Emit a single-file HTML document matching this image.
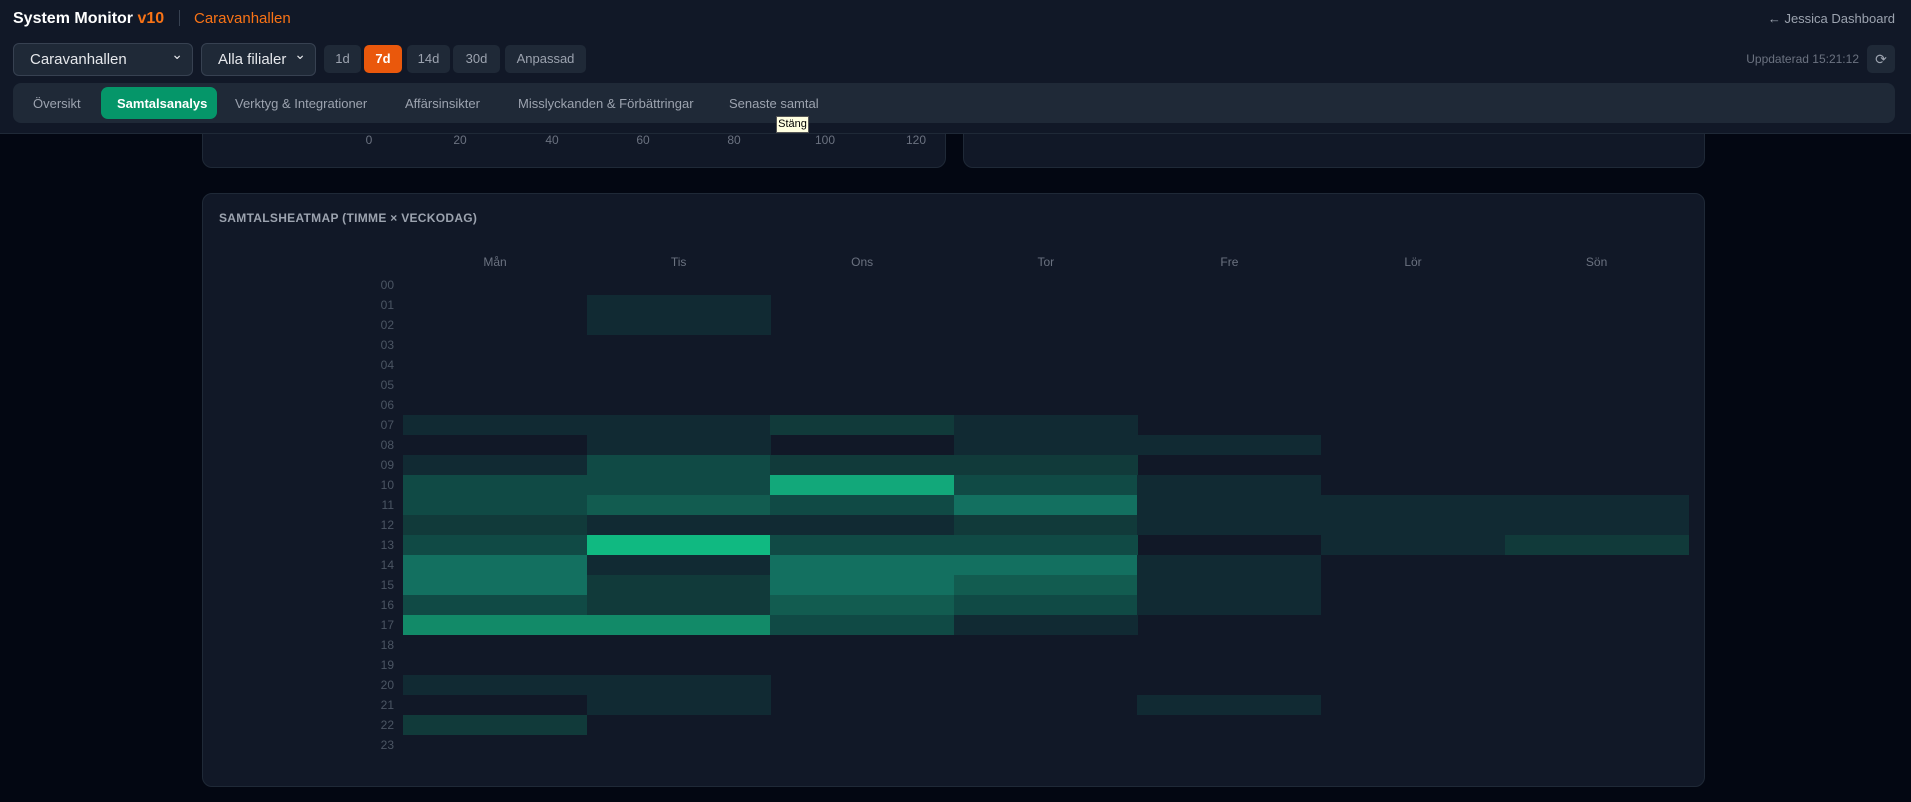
<!DOCTYPE html>
<html><head><meta charset="utf-8">
<style>
*{box-sizing:border-box;margin:0;padding:0}
body{width:1911px;height:802px;overflow:hidden;background:#030712;font-family:"Liberation Sans",sans-serif;position:relative;color:#e5e7eb}
.hdr{position:absolute;left:0;top:0;width:1911px;height:134px;background:#111827;border-bottom:1px solid #1f2937;z-index:2}
.abs{position:absolute}
.sel{position:absolute;top:43px;height:33px;background:#1f2937;border:1px solid #374151;border-radius:6px;color:#e5e7eb;font-size:15px;line-height:31px;padding-left:16px}
.sel:after{content:"⌄";position:absolute;right:9px;top:-5px;font-size:14px}
.btn{position:absolute;top:45px;height:28px;background:#1f2937;border-radius:5px;color:#9ca3af;font-size:13px;line-height:28px;text-align:center}
.nav{position:absolute;left:13px;top:83px;width:1882px;height:40px;background:#1f2937;border-radius:8px}
.tab{position:absolute;top:13px;font-size:13px;color:#9ca3af}
.card{position:absolute;background:#111827;border:1px solid #1f2937;border-radius:10px}
.cell{position:absolute;height:20px;width:184px}
.hl{position:absolute;width:40px;text-align:right;font-size:12px;color:#4b5563;left:354px}
.dl{position:absolute;top:255px;width:184px;text-align:center;font-size:12px;color:#6b7280}
.ax{position:absolute;top:133px;font-size:12px;color:#6b7280;width:30px;text-align:center}
</style></head><body>
<div class="hdr">
<div class="abs" style="left:13px;top:10px;font-size:16px;font-weight:bold;color:#fff">System Monitor <span style="color:#f97316">v10</span></div>
<div class="abs" style="left:179px;top:10px;width:1px;height:16px;background:#374151"></div>
<div class="abs" style="left:194px;top:10px;font-size:15px;color:#f97316">Caravanhallen</div>
<div class="abs" style="right:16px;top:11px;font-size:13px;color:#9ca3af">← Jessica Dashboard</div>
<div class="sel" style="left:13px;width:180px">Caravanhallen</div>
<div class="sel" style="left:201px;width:115px">Alla filialer</div>
<div class="btn" style="left:324px;width:37px">1d</div>
<div class="btn" style="left:364px;width:38px;background:#ea580c;color:#fff;font-weight:bold">7d</div>
<div class="btn" style="left:407px;width:43px">14d</div>
<div class="btn" style="left:453px;width:47px">30d</div>
<div class="btn" style="left:505px;width:81px">Anpassad</div>
<div class="abs" style="right:52px;top:52px;font-size:12px;color:#6b7280">Uppdaterad 15:21:12</div>
<div class="btn" style="left:1867px;width:28px;color:#9ca3af;font-size:14px">⟳</div>
<div class="nav">
<div class="tab" style="left:20px">Översikt</div>
<div class="abs" style="left:88px;top:4px;width:116px;height:32px;background:#059669;border-radius:7px"></div>
<div class="tab" style="left:104px;color:#fff;font-weight:bold">Samtalsanalys</div>
<div class="tab" style="left:222px">Verktyg &amp; Integrationer</div>
<div class="tab" style="left:392px">Affärsinsikter</div>
<div class="tab" style="left:505px">Misslyckanden &amp; Förbättringar</div>
<div class="tab" style="left:716px">Senaste samtal</div>
</div>
</div>
<div class="abs" style="left:776px;top:116px;width:33px;height:17px;background:#ffffe1;border:1px solid #555;font-size:11px;color:#000;line-height:15px;text-align:center;z-index:5">Stäng</div>
<div class="card" style="left:202px;top:100px;width:744px;height:68px"></div>
<div class="card" style="left:963px;top:100px;width:742px;height:68px"></div>
<div class="ax" style="left:354px">0</div><div class="ax" style="left:445px">20</div><div class="ax" style="left:537px">40</div><div class="ax" style="left:628px">60</div><div class="ax" style="left:719px">80</div><div class="ax" style="left:810px">100</div><div class="ax" style="left:901px">120</div>
<div class="card" style="left:202px;top:193px;width:1503px;height:594px"></div>
<div class="abs" style="left:219px;top:211px;font-size:12px;font-weight:bold;color:#9ca3af;letter-spacing:.3px">SAMTALSHEATMAP (TIMME × VECKODAG)</div>
<div id="g"></div>
<script>
var days=["Mån","Tis","Ons","Tor","Fre","Lör","Sön"];
var C={1:"#112a33",2:"#113a3a",3:"#104a45",4:"#125c50",5:"#137060",6:"#128a68",7:"#10b981",8:"#12a87a"};
var d={
"01":[0,1],"02":[0,1],
"07":[1,1,2,1],
"08":[0,1,0,1,1],
"09":[1,3,2,2],
"10":[3,3,8,3,1],
"11":[3,4,3,5,1,1,1],
"12":[2,1,1,2,1,1,1],
"13":[3,7,3,3,0,1,2],
"14":[5,1,5,5,1],
"15":[5,2,5,4,1],
"16":[3,2,4,3,1],
"17":[6,6,3,1],
"20":[1,1],
"21":[0,1,0,0,1],
"22":[2]};
var h="";
for(var i=0;i<7;i++)h+='<div class="dl" style="left:'+(403+i*183.6)+'px">'+days[i]+'</div>';
for(var r=0;r<24;r++){var k=(r<10?"0":"")+r;var y=275+r*20;
h+='<div class="hl" style="top:'+(y+3)+'px">'+k+'</div>';
var a=d[k]||[];for(var c=0;c<a.length;c++)if(a[c])h+='<div class="cell" style="left:'+(403+c*183.6)+'px;top:'+y+'px;background:'+C[a[c]]+'"></div>';}
document.getElementById("g").innerHTML=h;
</script>
</body></html>
